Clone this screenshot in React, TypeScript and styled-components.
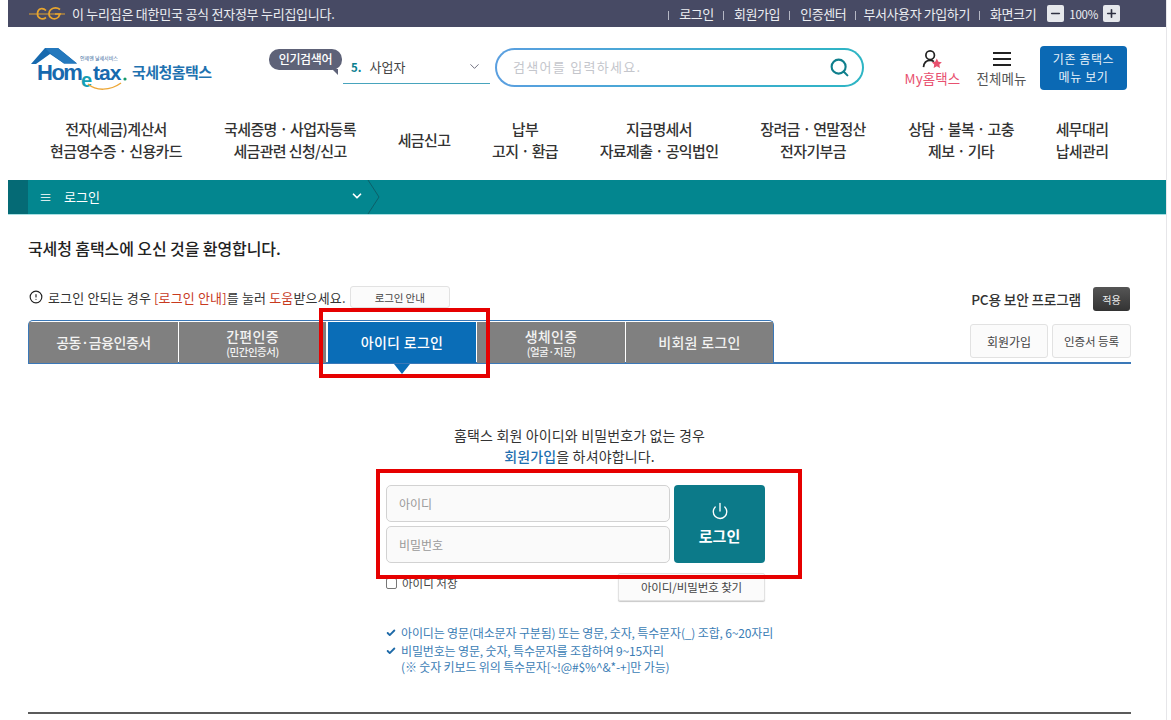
import React from "react";
import styled, { createGlobalStyle } from "styled-components";
import { ChevronDown, Check, CircleAlert, Minus, Plus, Power, Search } from "lucide-react";

const Global = createGlobalStyle`
  html, body { margin: 0; padding: 0; background: #fff; overflow: hidden; }
  * { box-sizing: border-box; }
  body { font-family: "Noto Sans CJK KR", "Noto Sans", sans-serif; color: #333; }
`;

const Frame = styled.div`
  position: relative;
  width: 1171px;
  height: 720px;
  padding: 0 4px 0 8px;
  overflow: hidden;
`;
const Page = styled.div`
  width: 1159px;
`;

const TopBar = styled.div`
  height: 27px;
  background: #474a64;
  color: #eceef2;
  display: flex;
  align-items: center;
  padding: 0 47px 0 21px;
  font-size: 13px;
  letter-spacing: -0.25px;
`;
const EgWrap = styled.svg`
  width: 37px;
  height: 14px;
  margin-right: 6px;
  flex: none;
`;
const TopLinks = styled.div`
  margin-left: auto;
  display: flex;
  align-items: center;
  letter-spacing: -0.4px;
`;
const TopLink = styled.span<{ $gap?: number }>`
  white-space: nowrap;
  margin-left: 9px;
  &::before {
    content: "";
    display: inline-block;
    width: 1px;
    height: 9px;
    background: #b5b7c4;
    margin: 0 ${(p) => p.$gap ?? 10}px 0 0;
    vertical-align: -1px;
  }
`;
const ZoomBtn = styled.span`
  width: 17px;
  height: 17px;
  border-radius: 2px;
  background: #e6e8ec;
  color: #2f3142;
  display: inline-flex;
  align-items: center;
  justify-content: center;
`;
const ZoomText = styled.span`
  margin: 0 5px;
  font-size: 11.5px;
  letter-spacing: -0.25px;
`;
const ZoomGroup = styled.div`
  display: flex;
  align-items: center;
  margin-left: 11px;
`;

const Header = styled.div`
  height: 83px;
  display: flex;
  align-items: flex-start;
  padding: 19px 0 0 20px;
`;
const Logo = styled.div`
  width: 184px;
  height: 50px;
  display: flex;
  align-items: flex-start;
  flex: none;
`;
const LogoName = styled.span`
  font-size: 15px;
  font-weight: 700;
  color: #1f72b0;
  letter-spacing: -0.55px;
  margin: 15px 0 0 0;
  white-space: nowrap;
`;
const Bubble = styled.div`
  position: relative;
  width: 73px;
  height: 21px;
  margin: 3px 0 0 57px;
  border-radius: 10px;
  background: #5e6278;
  color: #fff;
  font-size: 12px;
  font-weight: 500;
  letter-spacing: -0.3px;
  text-align: center;
  line-height: 20px;
  flex: none;
  &::after {
    content: "";
    position: absolute;
    right: 4px;
    bottom: -5px;
    border-top: 6px solid #5e6278;
    border-left: 6px solid transparent;
  }
`;
const Select = styled.div`
  width: 147px;
  height: 29px;
  margin: 9px 0 0 1px;
  padding: 0 8px 5px;
  border-bottom: 1px solid #48a4bd;
  display: flex;
  align-items: center;
  font-size: 13px;
  color: #444;
  flex: none;
`;
const SelectNum = styled.b`
  color: #0a7f8f;
  font-size: 11.5px;
  margin-right: 8px;
`;
const SelectChev = styled.span`
  margin-left: auto;
  display: flex;
  color: #667;
`;
const SearchBox = styled.div`
  width: 369px;
  height: 39px;
  margin: 2px 0 0 5px;
  border: 2px solid transparent;
  border-radius: 20px;
  background: linear-gradient(#fff, #fff) padding-box,
    linear-gradient(90deg, #5a9fe0, #2db5c4) border-box;
  display: flex;
  align-items: center;
  padding: 0 12px 2px 16px;
  font-size: 13px;
  letter-spacing: 1.3px;
  color: #c4c6cc;
  flex: none;
`;
const SearchIcon = styled.span`
  margin: 2px 0 0 auto;
  display: flex;
  color: #0f7f8c;
`;
const HeadItem = styled.div<{ $left: number; $w: number; $pink?: boolean }>`
  width: ${(p) => p.$w}px;
  margin-left: ${(p) => p.$left}px;
  height: 37px;
  margin-top: 4px;
  display: flex;
  flex-direction: column;
  align-items: center;
  justify-content: space-between;
  font-size: 13.5px;
  line-height: 18px;
  white-space: nowrap;
  letter-spacing: 0.1px;
  color: ${(p) => (p.$pink ? "#e8516f" : "#555")};
  flex: none;
`;
const OldMenu = styled.div`
  width: 87px;
  height: 44px;
  margin-left: 13px;
  background: #0b69b4;
  border-radius: 4px;
  color: #e8f2fa;
  font-size: 12px;
  line-height: 18px;
  letter-spacing: 0.6px;
  text-align: center;
  padding-top: 4px;
  flex: none;
`;

const Nav = styled.div`
  height: 70px;
  padding: 8px 0 0 20px;
  display: grid;
  grid-template-columns: 176px 172px 96px 106px 162px 146px 150px 92px;
  grid-auto-rows: 44px;
`;
const NavItem = styled.div`
  display: flex;
  align-items: center;
  justify-content: center;
  text-align: center;
  font-size: 15px;
  font-weight: 500;
  line-height: 22px;
  color: #333;
  letter-spacing: -0.65px;
  white-space: pre-line;
`;

const Crumb = styled.div`
  position: relative;
  height: 35px;
  background: #03868f;
  border-bottom: 1px solid #a8e0e3;
  display: flex;
  align-items: center;
  color: #fff;
  font-size: 13px;
  padding-bottom: 2px;
`;
const CrumbEdge = styled.div`
  width: 20px;
  height: 34px;
  margin-bottom: -2px;
  background: #056a75;
`;
const CrumbSeg = styled.div`
  width: 339px;
  padding: 0 3px 0 11px;
  display: flex;
  align-items: center;
  gap: 12px;
`;
const CrumbChev = styled.span`
  margin-left: auto;
  display: flex;
`;
const CrumbArrow = styled.svg`
  position: absolute;
  left: 359px;
  top: 0;
  width: 14px;
  height: 34px;
`;

const Content = styled.div`
  padding: 0 36px 0 20px;
`;
const Title = styled.h1`
  margin: 22px 0 0;
  height: 22px;
  font-size: 16px;
  line-height: 22px;
  font-weight: 500;
  color: #222;
  letter-spacing: -0.1px;
  white-space: nowrap;
`;
const NoticeRow = styled.div`
  margin-top: 27px;
  height: 34px;
  display: flex;
  align-items: flex-start;
`;
const Notice = styled.div`
  display: flex;
  align-items: center;
  height: 22px;
  font-size: 13px;
  letter-spacing: 0.15px;
  color: #333;
  white-space: nowrap;
`;
const NoticeIcon = styled.span`
  display: flex;
  margin: 0 5px 0 1px;
  color: #222;
`;
const Red = styled.span`
  color: #c83a1e;
`;
const GhostBtn = styled.button<{ $w: number; $h: number; $fs?: number }>`
  width: ${(p) => p.$w}px;
  height: ${(p) => p.$h}px;
  border: 1px solid #e2e2e2;
  border-radius: 3px;
  background: #fbfbfb;
  color: #444;
  font: inherit;
  font-size: ${(p) => p.$fs ?? 12}px;
  letter-spacing: -0.1px;
  padding: 0;
  flex: none;
`;
const NoticeBtn = styled(GhostBtn)`
  margin-left: 4px;
`;
const SecLabel = styled.span`
  margin-left: auto;
  font-size: 13.7px;
  font-weight: 500;
  line-height: 26px;
  color: #333;
  letter-spacing: -0.2px;
`;
const ApplyBtn = styled.button`
  width: 37px;
  height: 24px;
  margin: 1px 1px 0 12px;
  border: 0;
  border-radius: 3px;
  background: linear-gradient(#555, #333);
  color: #eee;
  font: inherit;
  font-size: 10px;
  padding: 0;
`;
const TabRow = styled.div`
  height: 44px;
  display: flex;
  align-items: flex-start;
  border-bottom: 2px solid #3a78b8;
`;
const TabStrip = styled.div`
  height: 43px;
  padding: 1px 0 0;
  display: flex;
  gap: 1px;
  border: 1px solid #3a78b8;
  border-bottom: 0;
  border-radius: 5px 5px 0 0;
`;
const Tab = styled.div<{ $active?: boolean; $w: number; $tight?: boolean }>`
  position: relative;
  width: ${(p) => p.$w}px;
  height: 41px;
  background: ${(p) => (p.$active ? "#0a6db7" : "#808080")};
  color: ${(p) => (p.$active ? "#fff" : "#f2f2f2")};
  margin-left: ${(p) => (p.$active ? "1px" : "0")};
  display: flex;
  flex-direction: column;
  align-items: center;
  justify-content: center;
  font-size: 14px;
  font-weight: 500;
  line-height: 17px;
  letter-spacing: ${(p) => (p.$tight ? "-0.45px" : "0.3px")};
  ${(p) =>
    p.$active
      ? `&::after {
    content: "";
    position: absolute;
    left: 66px;
    bottom: -11px;
    border-top: 10px solid #0a6db7;
    border-left: 8px solid transparent;
    border-right: 8px solid transparent;
  }`
      : ""}
`;
const TabSub = styled.span`
  font-size: 10.5px;
  line-height: 13px;
  letter-spacing: -0.5px;
`;
const TabActions = styled.div`
  margin: 4px 0 0 auto;
  display: flex;
  gap: 4px;
`;

const Intro = styled.div`
  margin-top: 61px;
  text-align: center;
  font-size: 14px;
  line-height: 21px;
  letter-spacing: 0.15px;
  color: #333;
`;
const IntroLink = styled.b`
  color: #1f6fb0;
  font-weight: 500;
`;
const LoginBlock = styled.div`
  width: 379px;
  margin: 18px 0 0 358px;
`;
const LoginGrid = styled.div`
  display: grid;
  grid-template-columns: 284px 91px;
  column-gap: 4px;
  row-gap: 4px;
  grid-template-rows: 37px 37px;
`;
const Field = styled.div`
  border: 1px solid #d2d2d2;
  border-radius: 5px;
  background: #fafafa;
  font-size: 12px;
  color: #999;
  display: flex;
  align-items: center;
  padding-left: 12px;
`;
const LoginBtn = styled.div`
  grid-column: 2;
  grid-row: 1 / span 2;
  background: #0c7a89;
  border-radius: 4px;
  color: #fff;
  display: flex;
  flex-direction: column;
  align-items: center;
  justify-content: center;
  gap: 5px;
  font-size: 15px;
  font-weight: 700;
  line-height: 22px;
`;
const SaveRow = styled.div`
  margin-top: 10px;
  display: flex;
  align-items: flex-start;
  justify-content: space-between;
`;
const Save = styled.label`
  display: flex;
  align-items: center;
  gap: 5px;
  font-size: 11.5px;
  color: #444;
  height: 12px;
  margin-top: 4px;
`;
const Box = styled.span`
  width: 11px;
  height: 11px;
  border: 1px solid #777;
  border-radius: 2px;
  background: #fff;
`;
const FindBtn = styled(GhostBtn)`
  box-shadow: 0 1px 1px #c8c8c8;
  border-radius: 2px;
`;
const Notes = styled.ul`
  list-style: none;
  margin: 24px 0 0;
  padding: 0;
  width: 420px;
  color: #3b7db5;
  font-size: 12px;
  line-height: 16px;
  letter-spacing: -0.15px;
`;
const NoteItem = styled.li`
  display: flex;
  gap: 5px;
  margin-bottom: 2px;
`;
const NoteCheck = styled.span`
  flex: none;
  display: flex;
  padding-top: 3px;
  color: #1e6aa8;
`;
const NoteText = styled.span`
  white-space: pre-line;
`;
const FootLine = styled.div`
  position: absolute;
  left: 28px;
  top: 712px;
  width: 1103px;
  height: 2px;
  background: #5b5b5b;
`;
const EdgeLine = styled.div`
  position: absolute;
  right: 4px;
  top: 0;
  width: 1px;
  height: 720px;
  background: #e6e6e9;
`;
const RedBox = styled.div<{ $x: number; $y: number; $w: number; $h: number }>`
  position: absolute;
  left: ${(p) => p.$x}px;
  top: ${(p) => p.$y}px;
  width: ${(p) => p.$w}px;
  height: ${(p) => p.$h}px;
  border: 4px solid #e60000;
  pointer-events: none;
`;

const EgLogo = () => (
  <EgWrap viewBox="0 0 37 14">
    <path d="M0 7h36" stroke="#e0a030" strokeWidth="1.2" fill="none" />
    <path d="M17 3.500C14 .5 9 1 8.500 6c-.5 5 4.500 7.500 8.500 4.500" stroke="#e8a52e" strokeWidth="1.7" fill="none" />
    <path d="M31 2.500C27 -.5 20.500 1 20 6.500c-.4 5 6 7 9.500 3.500L31 7h-5" stroke="#e8a52e" strokeWidth="1.7" fill="none" />
  </EgWrap>
);

const LogoArt = () => (
  <svg width="104" height="50" viewBox="0 0 104 50" style={{ flex: "none" }}>
    <path d="M3 18 17 2h13l19 15.500H36L22 8 8 18z" fill="#1769ae" />
    <path d="M17 2h13l19 15.500H36L22 7z" fill="#2478bd" />
    <text x="9" y="34" fontFamily="Liberation Sans, sans-serif" fontWeight="700" fontSize="22" letterSpacing="-1.500" fill="#1769ae">Hom</text>
    <text x="53" y="41" fontFamily="Liberation Sans, sans-serif" fontWeight="700" fontSize="20" fill="#14a0b5">e</text>
    <text x="65" y="34" fontFamily="Liberation Sans, sans-serif" fontWeight="700" fontSize="21" letterSpacing="-1" fill="#1769ae">tax</text>
    <circle cx="97" cy="33" r="1.600" fill="#149a6a" />
    <path d="M60 38c8 7 22 7 33-1" stroke="#eda737" strokeWidth="1.500" fill="none" />
    <text x="52" y="14" fontFamily="Noto Sans CJK KR, sans-serif" fontSize="5" fill="#3a6a9c">언제엔 날세서비스</text>
  </svg>
);

const UserIcon = () => (
  <svg width="24" height="20" viewBox="0 0 24 20">
    <circle cx="9" cy="5.500" r="4.500" fill="none" stroke="#222" strokeWidth="1.800" />
    <path d="M2 18c.5-4.500 3-7 7-7 1.500 0 3 .4 4 1.200" fill="none" stroke="#222" strokeWidth="1.800" />
    <path d="m16 9 1.700 3.300 3.600.5-2.600 2.500.6 3.600-3.300-1.700-3.300 1.700.6-3.600-2.600-2.500 3.600-.5z" fill="#e8516f" />
  </svg>
);

const BurgerIcon = () => (
  <svg width="20" height="16" viewBox="0 0 20 16" style={{ marginTop: 1 }}>
    <path d="M1 2h18M1 8h18M1 14h18" stroke="#222" strokeWidth="1.800" />
  </svg>
);

const navItems = [
  "전자(세금)계산서\n현금영수증 · 신용카드",
  "국세증명 · 사업자등록\n세금관련 신청/신고",
  "세금신고",
  "납부\n고지 · 환급",
  "지급명세서\n자료제출 · 공익법인",
  "장려금 · 연말정산\n전자기부금",
  "상담 · 불복 · 고충\n제보 · 기타",
  "세무대리\n납세관리",
];

const App = () => (
  <>
    <Global />
    <Frame>
      <Page>
        <TopBar>
          <EgLogo />
          <span>이 누리집은 대한민국 공식 전자정부 누리집입니다.</span>
          <TopLinks>
            <TopLink>로그인</TopLink>
            <TopLink>회원가입</TopLink>
            <TopLink>인증센터</TopLink>
            <TopLink $gap={7}>부서사용자 가입하기</TopLink>
            <TopLink>화면크기</TopLink>
            <ZoomGroup>
              <ZoomBtn><Minus size={13} strokeWidth={3} /></ZoomBtn>
              <ZoomText>100%</ZoomText>
              <ZoomBtn><Plus size={13} strokeWidth={3} /></ZoomBtn>
            </ZoomGroup>
          </TopLinks>
        </TopBar>

        <Header>
          <Logo>
            <LogoArt />
            <LogoName>국세청홈택스</LogoName>
          </Logo>
          <Bubble>인기검색어</Bubble>
          <Select>
            <SelectNum>5.</SelectNum>사업자
            <SelectChev><ChevronDown size={15} strokeWidth={1.5} /></SelectChev>
          </Select>
          <SearchBox>
            검색어를 입력하세요.
            <SearchIcon><Search size={21} strokeWidth={2.4} /></SearchIcon>
          </SearchBox>
          <HeadItem $left={40} $w={57} $pink>
            <UserIcon />
            <span>My홈택스</span>
          </HeadItem>
          <HeadItem $left={15} $w={51}>
            <BurgerIcon />
            <span>전체메뉴</span>
          </HeadItem>
          <OldMenu>기존 홈택스<br />메뉴 보기</OldMenu>
        </Header>

        <Nav>
          {navItems.map((t) => (
            <NavItem key={t}>{t}</NavItem>
          ))}
        </Nav>

        <Crumb>
          <CrumbEdge />
          <CrumbSeg>
            <span>≡</span>
            <span>로그인</span>
            <CrumbChev><ChevronDown size={14} strokeWidth={3} /></CrumbChev>
          </CrumbSeg>
          <CrumbArrow viewBox="0 0 14 34">
            <path d="M1 0 12 17 1 34" fill="none" stroke="#0d5f69" strokeWidth="1" />
          </CrumbArrow>
        </Crumb>

        <Content>
          <Title>국세청 홈택스에 오신 것을 환영합니다.</Title>
          <NoticeRow>
            <Notice>
              <NoticeIcon><CircleAlert size={14} strokeWidth={2} /></NoticeIcon>
              로그인 안되는 경우&nbsp;<Red>[로그인 안내]</Red>를 눌러&nbsp;<Red>도움</Red>받으세요.
            </Notice>
            <NoticeBtn $w={100} $h={22} $fs={10.5}>로그인 안내</NoticeBtn>
            <SecLabel>PC용 보안 프로그램</SecLabel>
            <ApplyBtn>적용</ApplyBtn>
          </NoticeRow>
          <TabRow>
            <TabStrip>
              <Tab $w={149} $tight>공동·금융인증서</Tab>
              <Tab $w={147}>간편인증<TabSub>(민간인증서)</TabSub></Tab>
              <Tab $w={148} $active>아이디 로그인</Tab>
              <Tab $w={148}>생체인증<TabSub>(얼굴·지문)</TabSub></Tab>
              <Tab $w={147}>비회원 로그인</Tab>
            </TabStrip>
            <TabActions>
              <GhostBtn $w={78} $h={34}>회원가입</GhostBtn>
              <GhostBtn $w={79} $h={34} $fs={11.5}>인증서 등록</GhostBtn>
            </TabActions>
          </TabRow>

          <Intro>
            홈택스 회원 아이디와 비밀번호가 없는 경우<br />
            <IntroLink>회원가입</IntroLink>을 하셔야합니다.
          </Intro>

          <LoginBlock>
            <LoginGrid>
              <Field>아이디</Field>
              <LoginBtn>
                <Power size={18} strokeWidth={1.8} />
                로그인
              </LoginBtn>
              <Field>비밀번호</Field>
            </LoginGrid>
            <SaveRow>
              <Save><Box />아이디 저장</Save>
              <FindBtn $w={147} $h={28} $fs={11.5}>아이디/비밀번호 찾기</FindBtn>
            </SaveRow>
            <Notes>
              <NoteItem>
                <NoteCheck><Check size={10} strokeWidth={4.500} /></NoteCheck>
                <NoteText>아이디는 영문(대소문자 구분됨) 또는 영문, 숫자, 특수문자(_) 조합, 6~20자리</NoteText>
              </NoteItem>
              <NoteItem>
                <NoteCheck><Check size={10} strokeWidth={4.500} /></NoteCheck>
                <NoteText>{"비밀번호는 영문, 숫자, 특수문자를 조합하여 9~15자리\n(※ 숫자 키보드 위의 특수문자[~!@#$%^&*-+]만 가능)"}</NoteText>
              </NoteItem>
            </Notes>
          </LoginBlock>
        </Content>
      </Page>
      <FootLine />
      <EdgeLine />
      <RedBox $x={319} $y={308} $w={171} $h={70} />
      <RedBox $x={376} $y={469} $w={426} $h={110} />
    </Frame>
  </>
);

export default App;
